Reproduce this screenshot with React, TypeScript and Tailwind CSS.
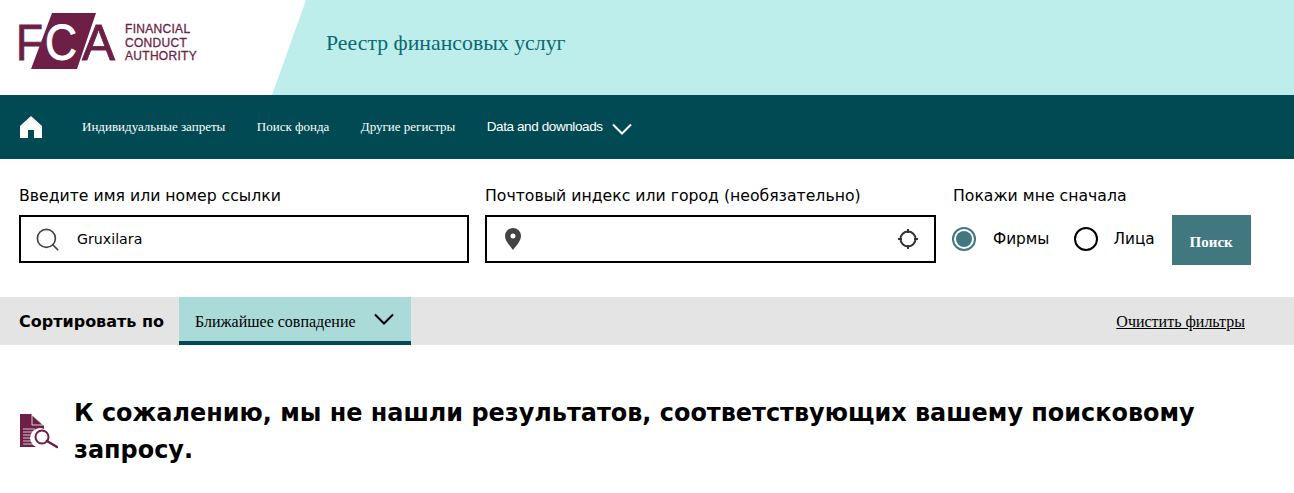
import { Search } from 'lucide-react';

const serif = 'font-["Liberation_Serif",serif]';

function FcaLogo() {
  return (
    <svg width="184" height="58" viewBox="-4 0 184 58" className="shrink-0">
      <polygon points="33,0 77,0 58,56 12,56" fill="#6d1f46" />
      <g fontFamily="Liberation Sans" fontSize="50" strokeWidth="0.9">
        <text x="-3" y="47" textLength="27" lengthAdjust="spacingAndGlyphs" fill="#6d1f46" stroke="#6d1f46">F</text>
        <text x="26" y="47" textLength="32" lengthAdjust="spacingAndGlyphs" fill="#fff" stroke="#fff">C</text>
        <text x="63" y="47" textLength="33" lengthAdjust="spacingAndGlyphs" fill="#6d1f46" stroke="#6d1f46">A</text>
      </g>
      <g fontFamily="Liberation Sans" fontSize="12" fill="#6d1f46" stroke="#6d1f46" strokeWidth="0.3" letterSpacing="0.3">
        <text x="106" y="20">FINANCIAL</text>
        <text x="106" y="34">CONDUCT</text>
        <text x="106" y="47">AUTHORITY</text>
      </g>
    </svg>
  );
}

function NoResultIcon() {
  return (
    <svg width="38" height="36" viewBox="0 0 38 36" className="shrink-0">
      <path d="M0 0H11L24 12V15A9 9 0 0 0 16 33H0Z" fill="#6d1f46" />
      <path d="M12 1L23 11H12Z" fill="#6d1f46" stroke="#fff" strokeWidth="0.8" />
      <path d="M3 15H15M3 18H13M3 21H12M3 24H12M3 27H13M3 30H15" stroke="#fff" strokeWidth="1" opacity="0.75" />
      <circle cx="22" cy="23" r="6.5" fill="#fff" stroke="#6d1f46" strokeWidth="2" />
      <path d="M27 27L37 33" stroke="#6d1f46" strokeWidth="2.5" strokeLinecap="round" />
    </svg>
  );
}

function Chevron() {
  return (
    <svg width="20" height="12" viewBox="0 0 20 12" fill="none" stroke="currentColor" strokeWidth="2">
      <path d="M1 1.500L10 10.500L19 1.500" />
    </svg>
  );
}

export default function App() {
  return (
    <div className='h-[493px] w-[1294px] overflow-hidden bg-white font-["DejaVu_Sans",sans-serif] text-black'>
      <header className="flex h-[95px] bg-[#bdeeeb]">
        <div className="flex w-[306px] items-start bg-white pl-[15px] pt-[13px] [clip-path:polygon(0_0,100%_0,272px_100%,0_100%)]">
          <FcaLogo />
        </div>
        <div className={`ml-5 flex items-center pb-[8px] text-[21.800px] text-[#0a6a70] ${serif}`}>
          Реестр финансовых услуг
        </div>
      </header>

      <nav className="flex h-16 items-center bg-[#014a54] pl-5 text-white">
        <svg width="22" height="22" viewBox="0 0 22 22" fill="#fff" className="mr-10">
          <path d="M11 0L22 10V22H14V14H8V22H0V10Z" />
        </svg>
        <div className={`flex items-center gap-[31.500px] text-[13px] ${serif}`}>
          <span>Индивидуальные запреты</span>
          <span>Поиск фонда</span>
          <span>Другие регистры</span>
          <span className='flex items-center gap-[9px] font-["Liberation_Sans",sans-serif] text-[13.500px] tracking-[-0.4px]'>
            Data and downloads
            <span className="mt-1"><Chevron /></span>
          </span>
        </div>
      </nav>

      <section className="flex h-[138px] gap-4 pl-[19px] pt-[26px]">
        <div className="w-[450px]">
          <label className="block pt-px text-[15.700px] leading-5">Введите имя или номер ссылки</label>
          <div className="mt-[9px] flex h-12 items-center border-2 border-black pl-[13px]">
            <Search size={27} strokeWidth={1.5} className="text-[#444]" />
            <span className="ml-4 pt-0.5 text-[14.200px]">Gruxilara</span>
          </div>
        </div>
        <div className="w-[451px]">
          <label className="block pt-px text-[15.700px] leading-5">Почтовый индекс или город (необязательно)</label>
          <div className="mt-[9px] flex h-12 items-center justify-between border-2 border-black pl-[17px] pr-[15px]">
            <svg width="18" height="22" viewBox="0 0 18 22">
              <path fillRule="evenodd" fill="#444" d="M9 0A8 8 0 0 1 17 8C17 13 12 18 9 22C6 18 1 13 1 8A8 8 0 0 1 9 0ZM9 5.500A2.500 2.500 0 1 0 9 10.500A2.500 2.500 0 0 0 9 5.500Z" />
            </svg>
            <svg width="22" height="22" viewBox="0 0 22 22" fill="none" stroke="#333" strokeWidth="2">
              <circle cx="11" cy="11" r="7.500" />
              <path d="M11 1V5M11 17V21M1 11H5M17 11H21" />
            </svg>
          </div>
        </div>
        <div>
          <label className="ml-px block pt-px text-[15.700px] leading-5">Покажи мне сначала</label>
          <div className="mt-[9px] flex h-[50px] items-start">
            <div className="mt-3 flex items-center">
              <span className="flex size-6 items-center justify-center rounded-full border-2 border-[#41777f]">
                <span className="size-4 rounded-full bg-[#41777f]" />
              </span>
              <span className="ml-[17px] text-[15.300px]">Фирмы</span>
              <span className="ml-[25px] size-6 rounded-full border-2 border-black" />
              <span className="ml-[15px] text-[15.300px]">Лица</span>
            </div>
            <button className={`ml-[17px] h-[50px] w-[79px] bg-[#41777f] pt-1 text-[15px] font-bold text-white ${serif}`}>
              Поиск
            </button>
          </div>
        </div>
      </section>

      <section className="flex h-12 items-stretch bg-[#e4e4e4] pl-[19px]">
        <div className="flex w-[160px] items-center pt-px text-[16px] font-bold">Сортировать по</div>
        <div className={`flex w-[232px] items-center border-b-4 border-[#014a54] bg-[#abdbd9] pl-4 text-[16px] ${serif}`}>
          <span className="pt-[5px]">Ближайшее совпадение</span>
          <span className="ml-[18px]"><Chevron /></span>
        </div>
        <a className={`ml-auto mr-[49px] self-center pt-[2px] text-[16px] underline ${serif}`}>Очистить фильтры</a>
      </section>

      <section className="flex items-center gap-4 pl-5 pt-[50px]">
        <NoResultIcon />
        <h1 className="w-[1150px] text-[23.930px] font-bold leading-[37px]">
          К сожалению, мы не нашли результатов, соответствующих вашему поисковому запросу.
        </h1>
      </section>
    </div>
  );
}
